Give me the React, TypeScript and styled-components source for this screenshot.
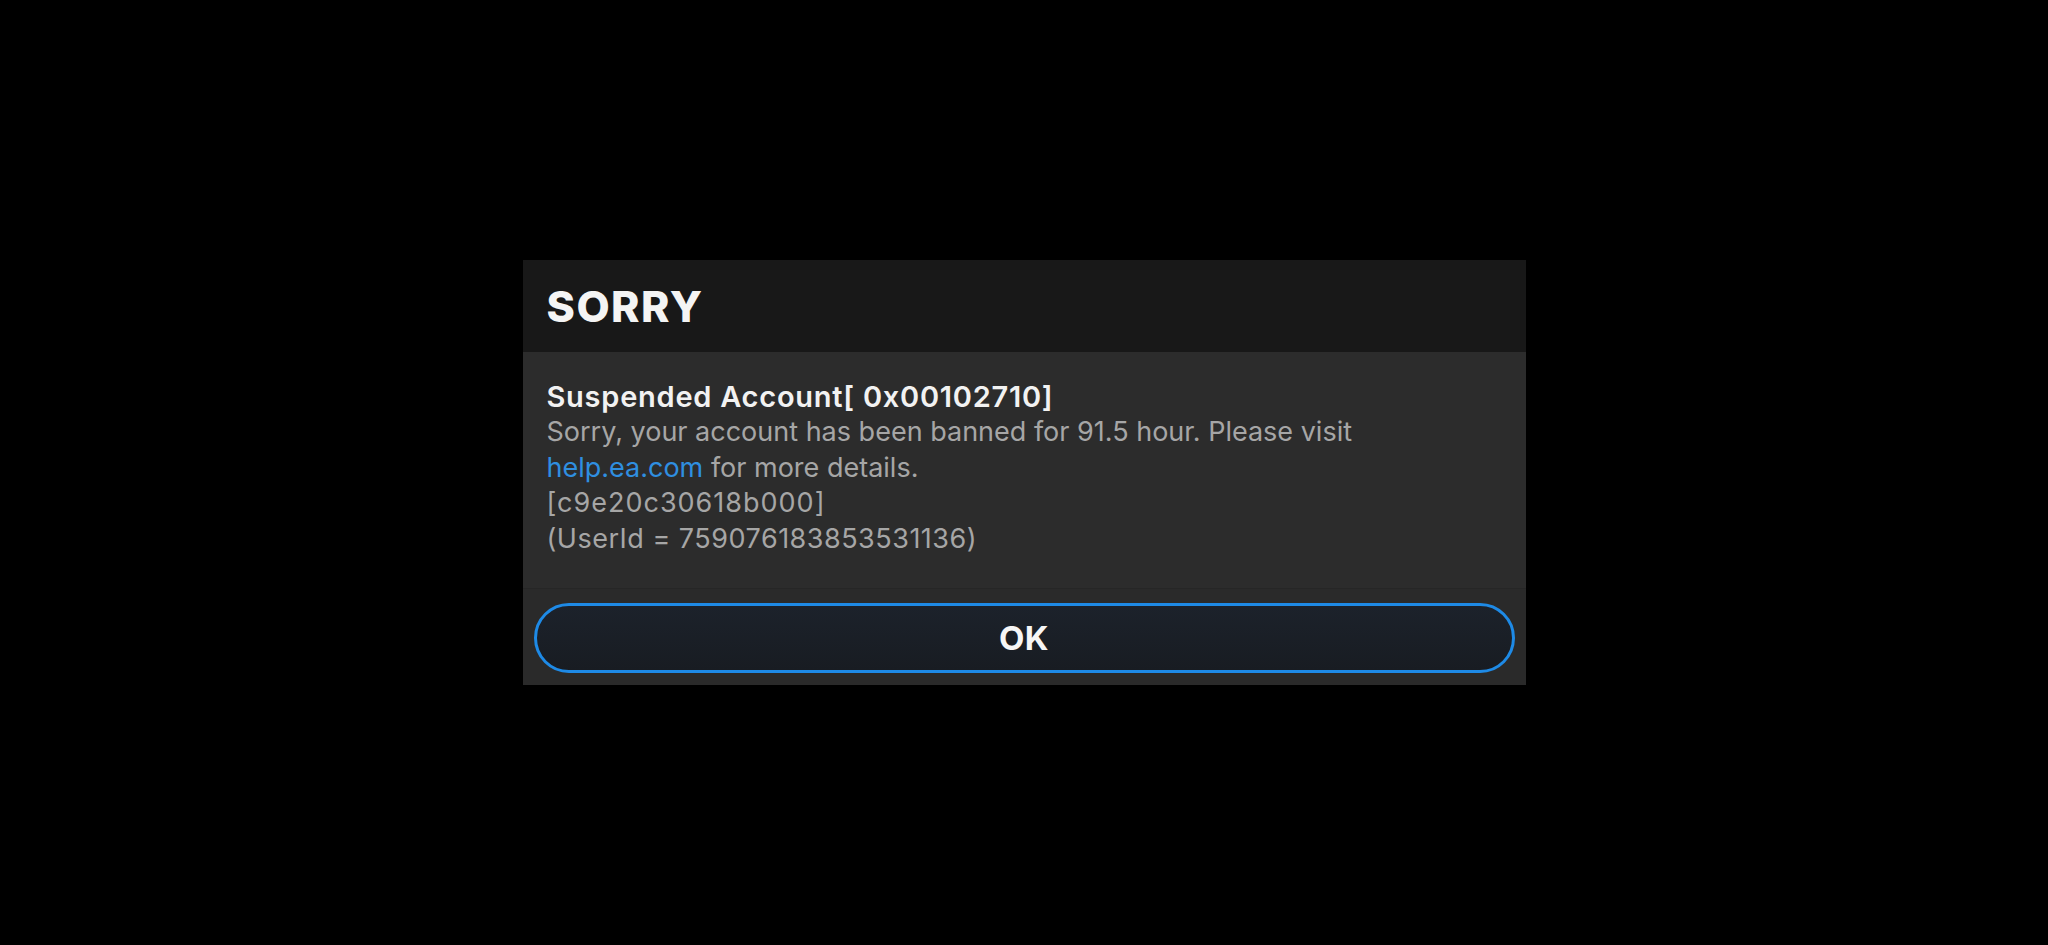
import * as React from 'react';
import styled, { createGlobalStyle } from 'styled-components';

const GlobalStyle = createGlobalStyle`
  html, body {
    margin: 0;
    padding: 0;
    background: #000;
  }

  * {
    box-sizing: border-box;
  }
`;

const Screen = styled.div`
  width: 100vw;
  height: 100vh;
  display: flex;
  align-items: center;
  justify-content: center;
  background: #000;
  font-family: Inter, 'Liberation Sans', sans-serif;
`;

const Dialog = styled.div`
  width: 1003px;
  height: 425px;
  display: flex;
  flex-direction: column;
  background: #2c2c2c;
`;

const Header = styled.div`
  height: 92px;
  display: flex;
  align-items: center;
  padding: 0 24px;
  background: #181818;
`;

const Title = styled.h1`
  margin: 0;
  font-size: 43px;
  font-weight: 800;
  letter-spacing: 1.5px;
  color: #f4f4f4;
`;

const Body = styled.div`
  flex: 1;
  padding: 27px 24px 0;
  border-bottom: 1px solid #262626;
`;

const Heading = styled.div`
  font-size: 29px;
  line-height: 35px;
  font-weight: 600;
  letter-spacing: 0.75px;
  color: #f2f2f2;
`;

const Line = styled.div<{ $spread?: number }>`
  font-size: 27px;
  line-height: 35.5px;
  font-weight: 400;
  color: #a6a6a6;
  letter-spacing: ${(p) => p.$spread ?? 0}px;
`;

const Link = styled.a`
  color: #2f8fe0;
  text-decoration: none;
`;

const Footer = styled.div`
  padding: 14px 11px 12px;
  background: #2a2a2a;
`;

const OkButton = styled.button`
  width: 100%;
  height: 70px;
  border: 3px solid #1e8ae6;
  border-radius: 35px;
  background: linear-gradient(180deg, #1c222b 0%, #181c22 100%);
  color: #f6f6f6;
  font-family: Inter, 'Liberation Sans', sans-serif;
  font-size: 33px;
  font-weight: 700;
  letter-spacing: 0.5px;
  cursor: pointer;
`;

export default function App() {
  return (
    <>
      <GlobalStyle />
      <Screen>
        <Dialog>
          <Header>
            <Title>SORRY</Title>
          </Header>
          <Body>
            <Heading>Suspended Account[ 0x00102710]</Heading>
            <Line>Sorry, your account has been banned for 91.5 hour. Please visit</Line>
            <Line>
              <Link href="#">help.ea.com</Link> for more details.
            </Line>
            <Line $spread={1}>[c9e20c30618b000]</Line>
            <Line $spread={0.5}>(UserId = 759076183853531136)</Line>
          </Body>
          <Footer>
            <OkButton>OK</OkButton>
          </Footer>
        </Dialog>
      </Screen>
    </>
  );
}
